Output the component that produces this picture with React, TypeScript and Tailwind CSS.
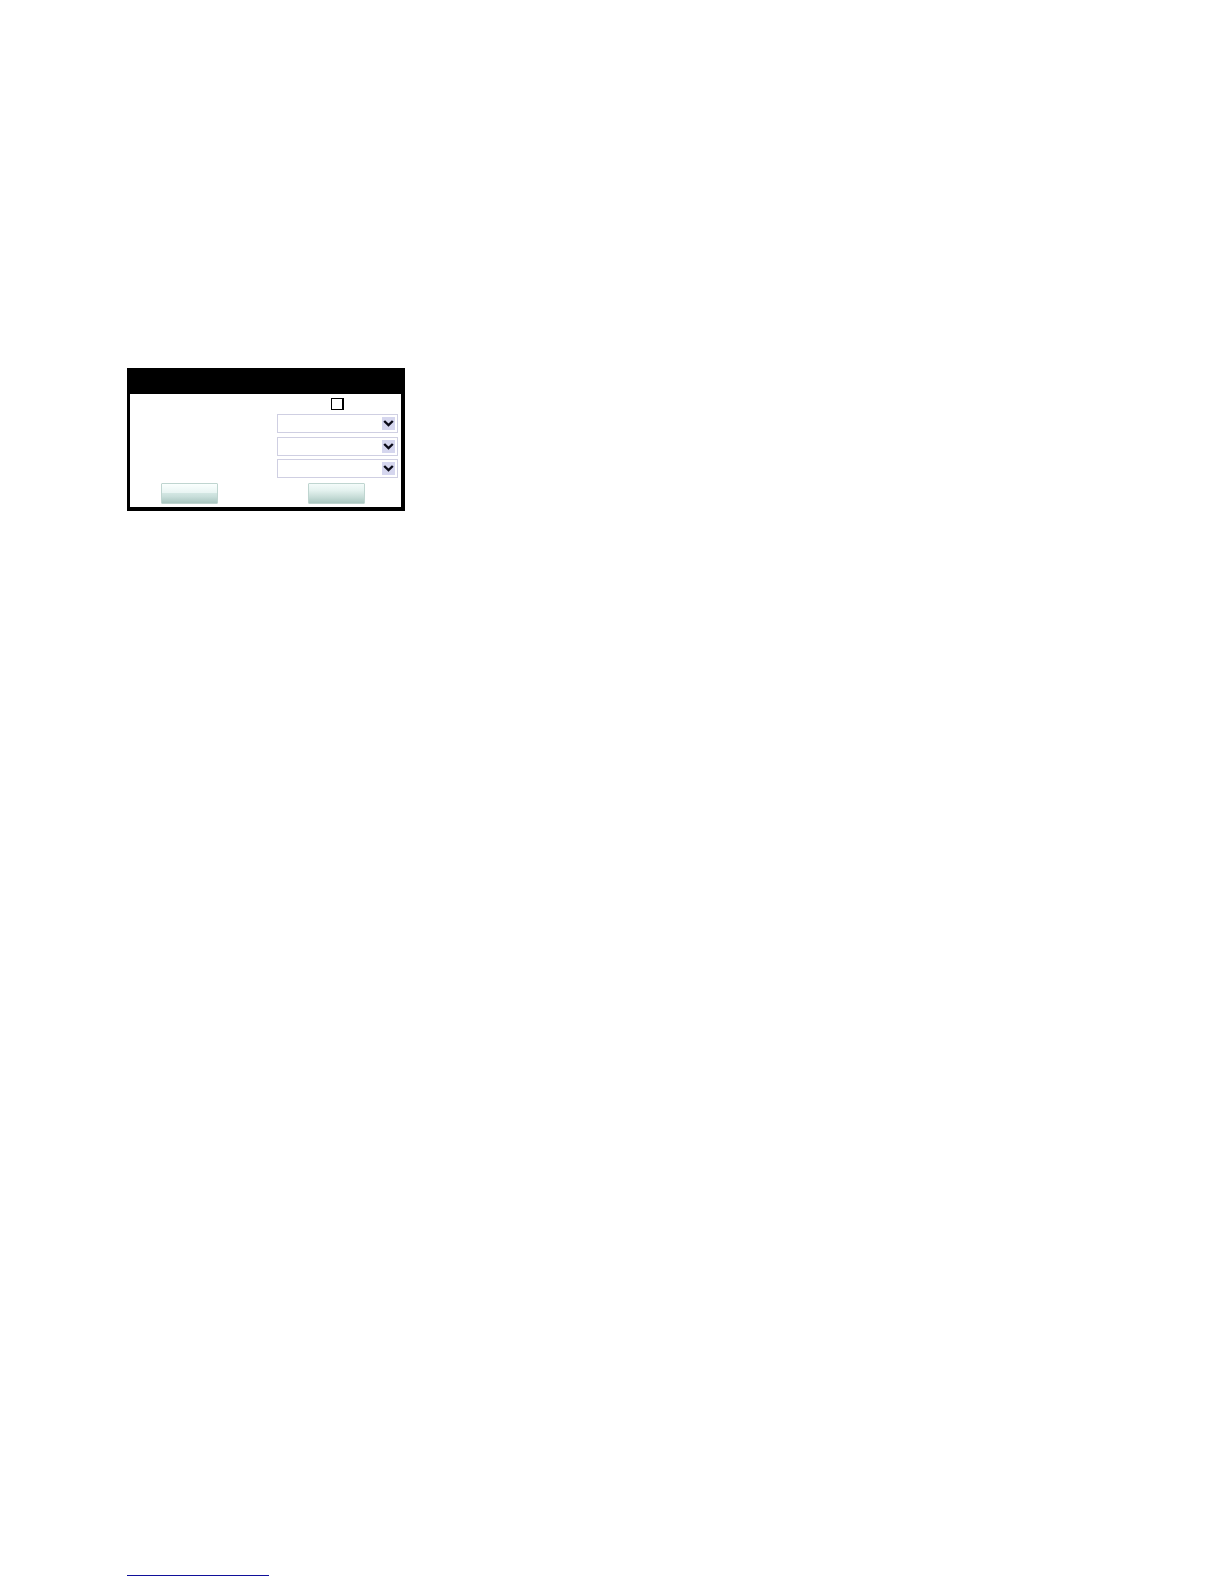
const selects = [
    { id: "first-option", label: "First option", margin: "mt-1" },
    { id: "second-option", label: "Second option", margin: "mt-1" },
    { id: "third-option", label: "Third option", margin: "mt-[3px]" },
];

const SelectField = ({ id, label, margin }: { id: string; label: string; margin: string }) => {
    return (
        <div className={`relative w-full ${margin}`}>
            <select
                id={id}
                aria-label={label}
                className="block h-[19px] w-full appearance-none border border-[#cfcfe2] bg-white pl-1 pr-5 text-xs outline-none"
            >
                <option value=""></option>
            </select>
            <span className="pointer-events-none absolute right-[3px] top-[3px] flex h-[13px] w-[13px] items-center justify-center bg-[#d5d6ee]">
                <svg width="13" height="13" viewBox="0 0 13 13" fill="none" aria-hidden="true">
                    <path d="M2.2 4L6.5 8.1L10.8 4" stroke="#0b0b18" strokeWidth="2.4" />
                </svg>
            </span>
        </div>
    );
};

const App = () => {
    return (
        <main className="flex min-h-screen flex-col items-start bg-white px-[127px] pb-2 pt-[368px] font-['Liberation_Sans',sans-serif]">
            <form
                className="w-[278px] border-b-4 border-l-[3px] border-r-4 border-black bg-white"
                onSubmit={(e) => e.preventDefault()}
            >
                <div className="h-[26px] bg-black"></div>

                <div className="grid grid-cols-[147px_1fr] pb-[3px] pr-[3px] pt-1">
                    <div className="col-start-2 flex flex-col items-center">
                        <input
                            type="checkbox"
                            aria-label="Enable"
                            className="block h-3 w-[13px] appearance-none border border-r-2 border-black bg-white checked:bg-black"
                        />
                        {selects.map((select) => (
                            <SelectField key={select.id} {...select} />
                        ))}
                    </div>

                    <div className="mt-[5px] pl-[31px]">
                        <button
                            type="submit"
                            aria-label="Submit"
                            className="block h-[21px] w-[57px] rounded-[1px] border border-[#bfd5d0] bg-[linear-gradient(to_bottom,#fafffe_0%,#e9f5f3_45%,#d2e6e2_50%,#c9dfdb_65%,#a9c6c0_100%)]"
                        ></button>
                    </div>
                    <div className="mt-[5px] pl-[31px]">
                        <button
                            type="reset"
                            aria-label="Reset"
                            className="block h-[21px] w-[57px] rounded-[1px] border border-[#bfd5d0] bg-[linear-gradient(to_bottom,#f4fbfa_0%,#e3f1ee_35%,#c6dcd7_70%,#a9c6c0_100%)]"
                        ></button>
                    </div>
                </div>
            </form>

            <a href="#" aria-label="Website" className="mt-auto block h-4 w-[142px] border-b border-[#10109a]"></a>
        </main>
    );
};

export default App;
